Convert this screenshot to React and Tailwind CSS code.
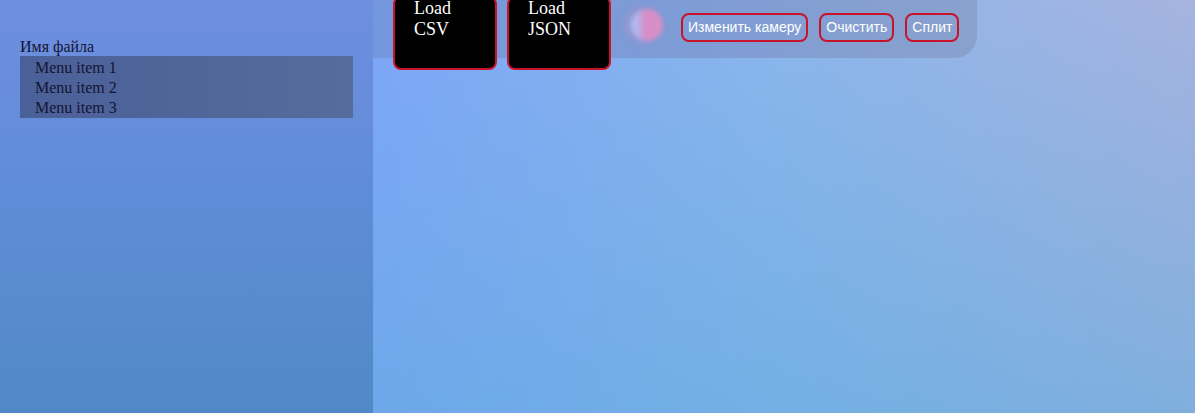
import React from 'react';

const menuItems = ['Menu item 1', 'Menu item 2', 'Menu item 3'];
const actions = ['Изменить камеру', 'Очистить', 'Сплит'];

const LoadButton = ({ label }) => (
  <button className="-mt-1 h-[74px] w-[104px] shrink-0 rounded-lg border-2 border-[#c8142a] bg-black pl-[19px] pr-2 text-left align-top font-['Liberation_Serif',serif] text-[18px] leading-[20.7px] text-white flex flex-col justify-start pt-0">
    <span>Load</span>
    <span>{label}</span>
  </button>
);

const App = () => {
  return (
    <div className="flex h-screen w-full overflow-hidden bg-[linear-gradient(180deg,rgba(90,170,220,0)_0%,rgba(90,170,220,0.5)_100%),linear-gradient(90deg,#7fa6f8_31%,#8cb6ec_65%,#a6b3df_100%)] font-['Liberation_Serif',serif] text-black">
      <aside className="h-full w-[373px] shrink-0 bg-[linear-gradient(180deg,#6f8ee0_0%,#5e8cd6_50%,#5189c6_100%)] px-5 pt-[38px]">
        <div className="text-[16px] leading-[18.4px] text-[#141433]">Имя файла</div>
        <ul className="bg-[linear-gradient(90deg,#4a6098,#566c9c)] pl-[15px] pt-[2px]">
          {menuItems.map((item) => (
            <li key={item} className="text-[16px] leading-[20px] text-[#141433]">
              {item}
            </li>
          ))}
        </ul>
      </aside>

      <main className="flex flex-1 flex-col">
        <div className="flex">
          <div className="flex h-[58px] w-[604px] items-start gap-[10px] rounded-br-[22px] bg-[linear-gradient(90deg,#7397de,#89a1cd)] pl-5">
            <LoadButton label="CSV" />
            <LoadButton label="JSON" />
            <div className="ml-[10px] mt-[9px] h-[32px] w-[32px] shrink-0 rounded-full bg-[linear-gradient(90deg,#a9c2f6_0%,#b8b2ea_22%,#d78cc6_45%,#d991c4_100%)] blur-[2px] shadow-[-6px_0_8px_rgba(216,140,196,0.35)]" />
            <div className="ml-[8px] mt-[13px] flex gap-[11px] font-['Liberation_Sans',Arial,sans-serif]">
              {actions.map((a) => (
                <button
                  key={a}
                  className="rounded-lg border-2 border-[#c8142a] bg-transparent px-[5px] py-1 text-[14px] leading-[17px] text-white"
                >
                  {a}
                </button>
              ))}
            </div>
          </div>
        </div>
        <div className="flex-1" />
      </main>
    </div>
  );
};

export default App;
